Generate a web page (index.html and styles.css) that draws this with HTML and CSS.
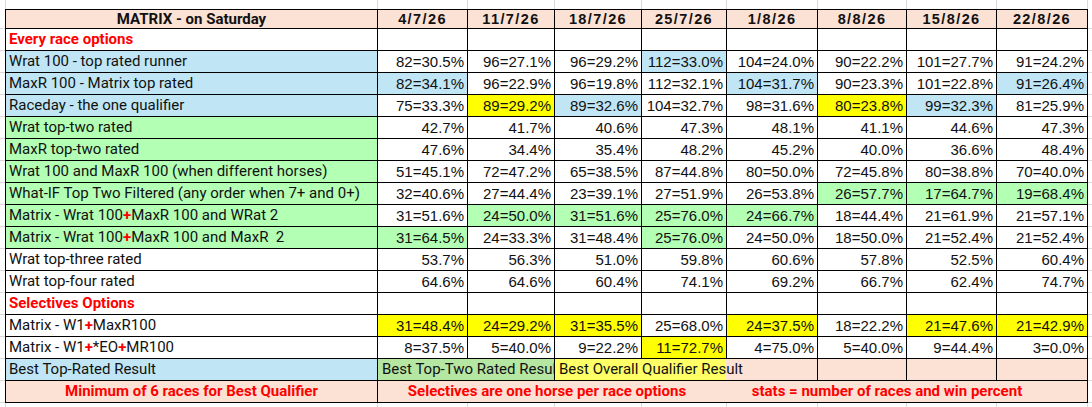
FILE: index.html
```html
<!DOCTYPE html>
<html>
<head>
<meta charset="utf-8">
<link rel="stylesheet" href="styles.css">
</head>
<body>
<div class="strip">
  <div></div><div></div><div></div><div></div><div></div><div></div><div></div><div></div><div></div><div></div><div></div>
</div>
<div class="mid">
  <div class="side"></div>
  <div class="table">
    <div class="c hd hlbl">MATRIX - on Saturday</div>
    <div class="c hd">4/7/26</div><div class="c hd">11/7/26</div><div class="c hd">18/7/26</div><div class="c hd">25/7/26</div><div class="c hd">1/8/26</div><div class="c hd">8/8/26</div><div class="c hd">15/8/26</div><div class="c hd">22/8/26</div>

    <div class="c lbl sec">Every race options</div>
    <div class="c"></div><div class="c"></div><div class="c"></div><div class="c"></div><div class="c"></div><div class="c"></div><div class="c"></div><div class="c"></div>

    <div class="c lbl blue">Wrat 100 - top rated runner</div>
    <div class="c">82=30.5%</div><div class="c">96=27.1%</div><div class="c">96=29.2%</div><div class="c blue">112=33.0%</div><div class="c">104=24.0%</div><div class="c">90=22.2%</div><div class="c">101=27.7%</div><div class="c">91=24.2%</div>

    <div class="c lbl blue">MaxR 100 - Matrix top rated</div>
    <div class="c blue">82=34.1%</div><div class="c">96=22.9%</div><div class="c">96=19.8%</div><div class="c">112=32.1%</div><div class="c blue">104=31.7%</div><div class="c">90=23.3%</div><div class="c">101=22.8%</div><div class="c blue">91=26.4%</div>

    <div class="c lbl blue">Raceday - the one qualifier</div>
    <div class="c">75=33.3%</div><div class="c yel">89=29.2%</div><div class="c blue">89=32.6%</div><div class="c">104=32.7%</div><div class="c">98=31.6%</div><div class="c yel">80=23.8%</div><div class="c blue">99=32.3%</div><div class="c">81=25.9%</div>

    <div class="c lbl green">Wrat top-two rated</div>
    <div class="c">42.7%</div><div class="c">41.7%</div><div class="c">40.6%</div><div class="c">47.3%</div><div class="c">48.1%</div><div class="c">41.1%</div><div class="c">44.6%</div><div class="c">47.3%</div>

    <div class="c lbl green">MaxR top-two rated</div>
    <div class="c">47.6%</div><div class="c">34.4%</div><div class="c">35.4%</div><div class="c">48.2%</div><div class="c">45.2%</div><div class="c">40.0%</div><div class="c">36.6%</div><div class="c">48.4%</div>

    <div class="c lbl green">Wrat 100 and MaxR 100 (when different horses)</div>
    <div class="c">51=45.1%</div><div class="c">72=47.2%</div><div class="c">65=38.5%</div><div class="c">87=44.8%</div><div class="c">80=50.0%</div><div class="c">72=45.8%</div><div class="c">80=38.8%</div><div class="c">70=40.0%</div>

    <div class="c lbl green">What-IF Top Two Filtered (any order when 7+ and 0+)</div>
    <div class="c">32=40.6%</div><div class="c">27=44.4%</div><div class="c">23=39.1%</div><div class="c">27=51.9%</div><div class="c">26=53.8%</div><div class="c green">26=57.7%</div><div class="c green">17=64.7%</div><div class="c green">19=68.4%</div>

    <div class="c lbl green">Matrix - Wrat 100<span class="plus">+</span>MaxR 100 and WRat 2</div>
    <div class="c">31=51.6%</div><div class="c green">24=50.0%</div><div class="c green">31=51.6%</div><div class="c green">25=76.0%</div><div class="c green">24=66.7%</div><div class="c">18=44.4%</div><div class="c">21=61.9%</div><div class="c">21=57.1%</div>

    <div class="c lbl green">Matrix - Wrat 100<span class="plus">+</span>MaxR 100 and MaxR&nbsp; 2</div>
    <div class="c green">31=64.5%</div><div class="c">24=33.3%</div><div class="c">31=48.4%</div><div class="c green">25=76.0%</div><div class="c">24=50.0%</div><div class="c">18=50.0%</div><div class="c">21=52.4%</div><div class="c">21=52.4%</div>

    <div class="c lbl">Wrat top-three rated</div>
    <div class="c">53.7%</div><div class="c">56.3%</div><div class="c">51.0%</div><div class="c">59.8%</div><div class="c">60.6%</div><div class="c">57.8%</div><div class="c">52.5%</div><div class="c">60.4%</div>

    <div class="c lbl">Wrat top-four rated</div>
    <div class="c">64.6%</div><div class="c">64.6%</div><div class="c">60.4%</div><div class="c">74.1%</div><div class="c">69.2%</div><div class="c">66.7%</div><div class="c">62.4%</div><div class="c">74.7%</div>

    <div class="c lbl sec">Selectives Options</div>
    <div class="c"></div><div class="c"></div><div class="c"></div><div class="c"></div><div class="c"></div><div class="c"></div><div class="c"></div><div class="c"></div>

    <div class="c lbl">Matrix - W1<span class="plus">+</span>MaxR100</div>
    <div class="c yel">31=48.4%</div><div class="c yel">24=29.2%</div><div class="c yel">31=35.5%</div><div class="c">25=68.0%</div><div class="c yel">24=37.5%</div><div class="c">18=22.2%</div><div class="c yel">21=47.6%</div><div class="c yel">21=42.9%</div>

    <div class="c lbl">Matrix - W1<span class="plus">+</span>*EO<span class="plus">+</span>MR100</div>
    <div class="c">8=37.5%</div><div class="c">5=40.0%</div><div class="c">9=22.2%</div><div class="c yel">11=72.7%</div><div class="c">4=75.0%</div><div class="c">5=40.0%</div><div class="c">9=44.4%</div><div class="c">3=0.0%</div>

    <div class="c lbl blue">Best Top-Rated Result</div>
    <div class="c lbl best-green">Best Top-Two Rated Result</div>
    <div class="c lbl best-yel">Best Overall Qualifier Result</div>
    <div class="c peach"></div><div class="c peach"></div><div class="c peach"></div>

    <div class="c peach note">Minimum of 6 races for Best Qualifier</div>
    <div class="c peach note notes">
      <span class="n1">Selectives are one horse per race options</span>
      <span class="n2">stats = number of races and win percent</span>
    </div>
  </div>
  <div class="side side-r"></div>
</div>
<div class="strip strip-b">
  <div></div><div></div><div></div><div></div><div></div><div></div><div></div><div></div><div></div><div></div><div></div>
</div>
</body>
</html>
```
FILE: styles.css
```css
html, body {
  margin: 0;
  padding: 0;
  background: #fff;
}
body {
  width: 1092px;
  height: 407px;
  overflow: hidden;
}
.strip {
  display: grid;
  grid-template-columns: 5px 371px 89px 86px 86px 84px 90px 88px 89px 90px 4px;
  column-gap: 1px;
  background: #dadada;
  height: 9px;
}
.strip > div {
  background: #fff;
}
.strip-b {
  height: 4px;
}
.mid {
  display: flex;
}
.side {
  width: 5px;
  background: repeating-linear-gradient(to bottom, #fff 0 19px, #dadada 19px 20px, #fff 20px 22px);
}
.side-r {
  width: 4px;
}
.table {
  display: grid;
  grid-template-columns: 371px 89px 86px 86px 84px 90px 88px 89px 90px;
  grid-template-rows: 18px repeat(17, 21px);
  gap: 1px;
  padding: 1px;
  background: #000;
}
.c {
  background: #fff;
  color: #111;
  font-family: "Liberation Sans", Arial, sans-serif;
  font-size: 15px;
  line-height: 21px;
  text-align: right;
  padding: 0 3px 0 3px;
  white-space: nowrap;
  overflow: hidden;
}
.hd {
  background: #fbe2d5;
  font-weight: bold;
  text-align: center;
  line-height: 18px;
  font-size: 14.5px;
  letter-spacing: 1.4px;
}
.hlbl {
  font-family: Roboto, "Noto Sans", sans-serif;
  letter-spacing: 0;
  font-size: 15px;
}
.lbl {
  font-family: Roboto, "Noto Sans", sans-serif;
  text-align: left;
}
.sec {
  color: #ff0000;
  font-weight: bold;
}
.plus {
  color: #ff0000;
  font-weight: bold;
}
.blue { background: #c0e6f5; }
.green { background: #b3ffb3; }
.yel { background: #ffff00; }
.peach { background: #fbe2d5; }
.best-green {
  grid-column: span 2;
  background: #b5e6a2;
  padding-left: 4px;
}
.best-yel {
  grid-column: span 3;
  background: linear-gradient(to right, #ffff66 0 171px, #fbe2d5 171px);
  padding-left: 4px;
}
.note {
  font-family: Roboto, "Noto Sans", sans-serif;
  color: #ff0000;
  font-weight: bold;
  text-align: center;
}
.notes {
  grid-column: span 8;
  display: flex;
  padding: 0;
}
.n1 {
  width: 338px;
  text-align: center;
}
.n2 {
  width: 342px;
  text-align: center;
}
```
